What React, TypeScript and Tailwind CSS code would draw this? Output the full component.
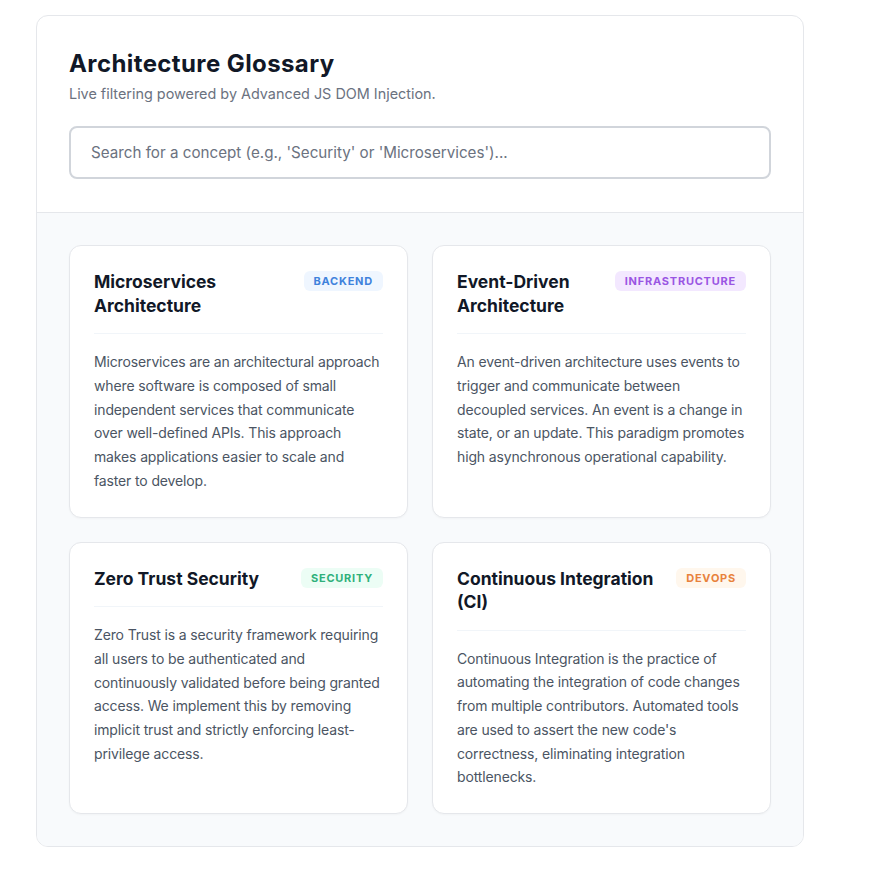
import React from "react";

type Term = {
  title: string;
  tag: string;
  tagClass: string;
  desc: string;
};

const terms: Term[] = [
  {
    title: "Microservices Architecture",
    tag: "Backend",
    tagClass: "bg-[#eff6ff] text-[#3f82dc]",
    desc:
      "Microservices are an architectural approach where software is composed of small independent services that communicate over well-defined APIs. This approach makes applications easier to scale and faster to develop.",
  },
  {
    title: "Event-Driven Architecture",
    tag: "Infrastructure",
    tagClass: "bg-[#f3e8ff] text-[#9a55e3]",
    desc:
      "An event-driven architecture uses events to trigger and communicate between decoupled services. An event is a change in state, or an update. This paradigm promotes high asynchronous operational capability.",
  },
  {
    title: "Zero Trust Security",
    tag: "Security",
    tagClass: "bg-[#ecfdf5] text-[#2fb07a]",
    desc:
      "Zero Trust is a security framework requiring all users to be authenticated and continuously validated before being granted access. We implement this by removing implicit trust and strictly enforcing least-privilege access.",
  },
  {
    title: "Continuous Integration (CI)",
    tag: "DevOps",
    tagClass: "bg-[#fff7ed] text-[#e8823c]",
    desc:
      "Continuous Integration is the practice of automating the integration of code changes from multiple contributors. Automated tools are used to assert the new code's correctness, eliminating integration bottlenecks.",
  },
];

export default function App() {
  return (
    <div className="min-h-screen bg-white pl-9 pt-[15px] font-['Inter',sans-serif]">
      <div className="w-[768px] rounded-xl border border-[#e5e7eb] bg-white overflow-hidden">
        <div className="px-8 pt-8 pb-[33px] border-b border-[#e5e7eb]">
          <h1 className="text-2xl leading-8 font-bold tracking-[0.4px] text-[#111827]">
            Architecture Glossary
          </h1>
          <p className="mt-1 text-[14.4px] leading-5 text-[#6b7280]">
            Live filtering powered by Advanced JS DOM Injection.
          </p>
          <input
            type="text"
            placeholder="Search for a concept (e.g., 'Security' or 'Microservices')..."
            className="mt-[22px] block w-full h-[53px] rounded-lg border-2 border-[#d1d5db] px-5 text-[15.2px] text-[#111827] placeholder:text-[#6b7280] outline-none bg-white"
          />
        </div>
        <div className="bg-[#f8fafc] p-8 grid grid-cols-2 gap-6">
          {terms.map((t) => (
            <div
              key={t.title}
              className="rounded-xl border border-[#e5e7eb] bg-white p-6 shadow-[0_1px_2px_rgba(0,0,0,0.03)]"
            >
              <div className="flex items-start justify-between gap-4 pb-4 mb-4 border-b border-[#f1f5f9]">
                <h2 className="text-[17.5px] leading-[23.5px] font-bold text-[#111827]">{t.title}</h2>
                <span
                  className={`shrink-0 mt-px rounded-md px-2.5 py-1 text-[11px] leading-3 font-bold uppercase tracking-[0.07em] ${t.tagClass}`}
                >
                  {t.tag}
                </span>
              </div>
              <p className="text-sm leading-[23.75px] tracking-[-0.01em] text-[#4b5563]">{t.desc}</p>
            </div>
          ))}
        </div>
      </div>
    </div>
  );
}
